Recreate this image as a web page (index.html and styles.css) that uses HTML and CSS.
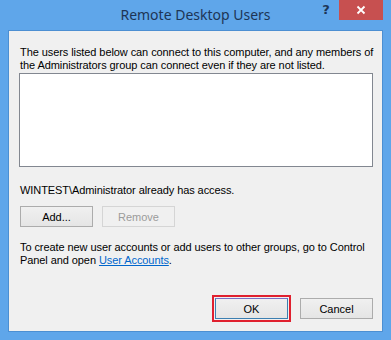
FILE: index.html
```html
<!DOCTYPE html>
<html lang="en">
<head>
    <meta charset="UTF-8">
    <title>Remote Desktop Users</title>
    <link rel="stylesheet" href="styles.css">
</head>
<body>
    <div class="window">
        <div class="titlebar">
            <div class="title">Remote Desktop Users</div>
            <div class="help-btn">?</div>
            <div class="close-btn">
                <svg width="10" height="10" viewBox="0 0 10 10">
                    <path d="M1.5 1.5 L8.5 8.5 M8.5 1.5 L1.5 8.5" stroke="#fff" stroke-width="1.8"/>
                </svg>
            </div>
        </div>

        <div class="client">
            <p class="intro">The users listed below can connect to this computer, and any members of<br>the Administrators group can connect even if they are not listed.</p>

            <div class="user-list"></div>

            <p class="access-note">WINTEST\Administrator already has access.</p>

            <div class="list-actions">
                <button class="win-button">Add...</button>
                <button class="win-button" disabled>Remove</button>
            </div>

            <p class="help-text">To create new user accounts or add users to other groups, go to Control<br>Panel and open <a href="#" class="link">User Accounts</a>.</p>

            <div class="dialog-actions">
                <button class="win-button default">OK</button>
                <button class="win-button">Cancel</button>
            </div>
        </div>
    </div>
</body>
</html>
```

FILE: styles.css
```css
* {
    margin: 0;
    padding: 0;
    box-sizing: border-box;
}

body {
    background: #5fa6ea;
    width: 391px;
    height: 340px;
    overflow: hidden;
    font-family: 'Liberation Sans', Arial, sans-serif;
    font-size: 11px;
    color: #000;
}

.window {
    display: flex;
    flex-direction: column;
    height: 340px;
}

.titlebar {
    height: 30px;
    position: relative;
    display: flex;
    justify-content: center;
}

.title {
    font-family: 'Noto Sans', sans-serif;
    font-size: 14px;
    color: #1d3556;
    line-height: 30px;
}

.help-btn {
    position: absolute;
    left: 320px;
    top: 2px;
    width: 12px;
    font-family: 'DejaVu Sans', sans-serif;
    font-weight: bold;
    font-size: 13px;
    color: #1d3556;
    text-align: center;
}

.close-btn {
    position: absolute;
    left: 339px;
    top: 0;
    width: 44px;
    height: 20px;
    background: #c75050;
    display: flex;
    align-items: center;
    justify-content: center;
}

.client {
    margin: 0 8px 8px 8px;
    height: 302px;
    background: #f0f0f0;
    border: 1px solid #4c8fd2;
    padding: 15px 9px 12px 10px;
    display: flex;
    flex-direction: column;
}

.intro,
.access-note,
.help-text {
    line-height: 13px;
    padding-left: 1px;
    white-space: nowrap;
    letter-spacing: -0.08px;
}

.user-list {
    margin-top: 1px;
    height: 94px;
    background: #fff;
    border: 1px solid #828790;
}

.access-note {
    margin-top: 17px;
}

.list-actions {
    display: flex;
    gap: 9px;
    margin-top: 9px;
    padding-left: 1px;
}

.help-text {
    margin-top: 14px;
}

.link {
    color: #0066cc;
    text-decoration: underline;
}

.dialog-actions {
    margin-top: auto;
    display: flex;
    justify-content: flex-end;
    gap: 12px;
}

.win-button {
    width: 73px;
    height: 21px;
    font-family: inherit;
    font-size: 11px;
    color: #000;
    background: linear-gradient(#f0f0f0, #e5e5e5);
    border: 1px solid #acacac;
}

.win-button:disabled {
    color: #9b9b9b;
    background: #f0f0f0;
    border-color: #d5d5d5;
}

.win-button.default {
    border-color: #3c7fb1;
    border-top-color: #7a6fc4;
    outline: 2px solid #e0202f;
    outline-offset: 1px;
}
```
